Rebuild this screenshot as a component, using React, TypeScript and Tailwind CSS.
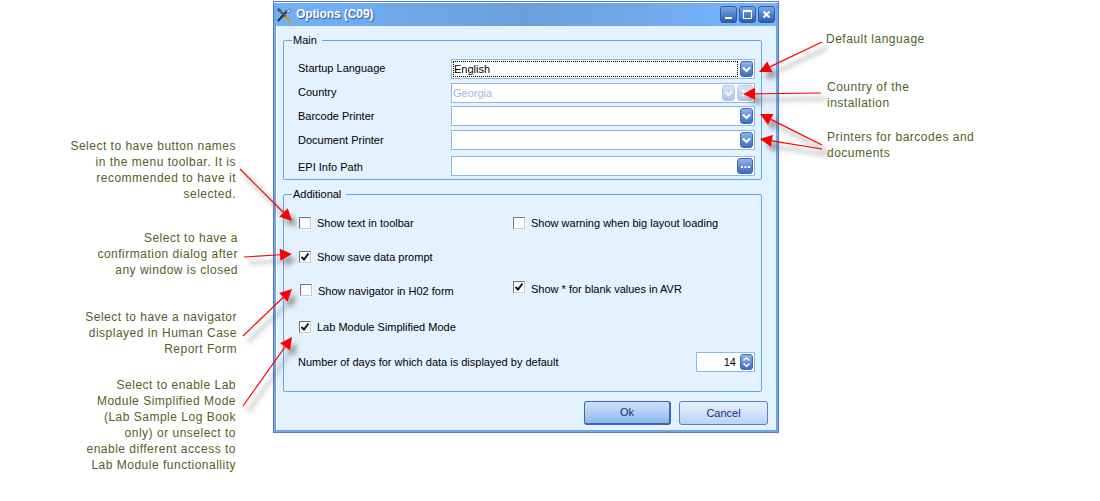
import React from 'react';

const arrows = [
  [822, 42, 759, 72],
  [821, 93, 743, 94],
  [822, 145, 760, 114],
  [822, 149, 760, 139],
  [240, 169, 292, 221],
  [244, 257, 292, 254],
  [243, 336, 292, 289],
  [243, 406, 292, 337],
];

const Arrows = () => (
  <svg width="1100" height="501" className="absolute inset-0 pointer-events-none">
    <defs>
      <filter id="soft" x="-30%" y="-30%" width="160%" height="160%">
        <feGaussianBlur stdDeviation="2.5" />
      </filter>
    </defs>
    {arrows.map(([x1, y1, x2, y2], i) => {
      const len = Math.hypot(x2 - x1, y2 - y1);
      const ux = (x2 - x1) / len;
      const uy = (y2 - y1) / len;
      const bx = x2 - ux * 12;
      const by = y2 - uy * 12;
      const head = `${x2},${y2} ${bx - uy * 6},${by + ux * 6} ${bx + uy * 6},${by - ux * 6}`;
      return (
        <g key={i}>
          <g transform="translate(5 6)" filter="url(#soft)" opacity="0.55">
            <line x1={x1} y1={y1} x2={bx} y2={by} stroke="#555" strokeWidth="2" />
            <polygon points={head} fill="#555" />
          </g>
          <line x1={x1} y1={y1} x2={bx} y2={by} stroke="#ff0000" strokeWidth="1.2" />
          <polygon points={head} fill="#ff0000" />
        </g>
      );
    })}
  </svg>
);

const Note = ({ className, children }: { className: string; children: React.ReactNode }) => (
  <div className={`absolute text-[12px] leading-[16px] tracking-[0.5px] text-[#4f6228] whitespace-nowrap ${className}`}>
    {children}
  </div>
);

const Chevron = ({ dim }: { dim?: boolean }) => (
  <svg width="9" height="7" viewBox="0 0 9 7">
    <path d="M1 1.5 L4.5 5 L8 1.5" fill="none" stroke="#fff" strokeWidth="2" opacity={dim ? 0.75 : 1} />
  </svg>
);

const DropButton = ({ children, dim, wide }: { children?: React.ReactNode; dim?: boolean; wide?: boolean }) => (
  <div
    className={`${wide ? 'w-[16px]' : 'w-[13px]'} h-[16px] rounded-[3px] flex items-center justify-center shrink-0 border ${
      dim
        ? 'border-[#b4c7e8] bg-gradient-to-b from-[#d6e2f6] to-[#b3c6e8]'
        : 'border-[#3f6bb5] bg-gradient-to-b from-[#8fb5ea] to-[#3d6cb8]'
    }`}
  >
    {children ?? <Chevron dim={dim} />}
  </div>
);

const Field = ({ children, className }: { children?: React.ReactNode; className: string }) => (
  <div className={`ml-[159px] w-[304px] bg-white border border-[#8fb6ee] flex items-center ${className}`}>{children}</div>
);

const Check = ({ checked, className = '' }: { checked?: boolean; className?: string }) => (
  <div
    className={`w-[12px] h-[12px] shrink-0 bg-white border border-t-[#707070] border-l-[#707070] border-r-[#c8c8c8] border-b-[#c8c8c8] shadow-[0_0_0_1px_#f4f8fd] flex items-center justify-center ${className}`}
  >
    {checked && (
      <svg width="10" height="10" viewBox="0 0 10 10">
        <path d="M1.5 5 L4 7.5 L8.5 1.5" fill="none" stroke="#111" strokeWidth="2" />
      </svg>
    )}
  </div>
);

const Tools = () => (
  <svg width="16" height="16" viewBox="0 0 16 16">
    <path d="M2 14 L11 4" stroke="#2b2b2b" strokeWidth="2" />
    <path d="M10 5 L13 2 L15 3 L13 6 Z" fill="#d8d8d8" stroke="#444" strokeWidth="0.6" />
    <path d="M3 1 L6 4 L5 6 L2 4 L1 2 Z" fill="#555" />
    <path d="M5 5 L10 10" stroke="#555" strokeWidth="2" />
    <path d="M9.5 9.5 L14 14" stroke="#d9962a" strokeWidth="3" />
  </svg>
);

const WinButton = ({ children }: { children: React.ReactNode }) => (
  <div className="w-[17px] h-[17px] rounded-[3px] border border-[#2f5aa6] bg-gradient-to-b from-[#7ba6e2] to-[#2e5ea8] flex items-center justify-center">
    {children}
  </div>
);

const Row = ({ label, className = '' }: { label: string; className?: string }) => (
  <div className={`absolute left-[14px] text-[#000] ${className}`}>{label}</div>
);

export default function App() {
  return (
    <div className="relative w-[1100px] h-[501px] overflow-hidden bg-white font-['Liberation_Sans',sans-serif]">
      <div className="ml-[273px] mt-px w-[506px] h-[432px] border border-[#5a78c0] pt-px">
        <div className="h-full border-2 border-t-0 border-[#6ea5ec] bg-[#e4f1fe] flex flex-col shadow-[inset_1px_0_0_#fff]">
          <div className="h-[23px] shrink-0 bg-gradient-to-r from-[#72b2f8] via-[#6a9fdc] to-[#76b6fc] flex items-center pr-px">
            <Tools />
            <span className="ml-[4px] -mt-[2px] text-[12px] font-bold tracking-[-0.1px] text-white [text-shadow:1px_1px_1px_#2f55a8]">Options (C09)</span>
            <div className="ml-auto flex gap-[2px]">
              <WinButton>
                <div className="w-[7px] h-[2px] mt-[7px] bg-white" />
              </WinButton>
              <WinButton>
                <div className="w-[9px] h-[9px] border border-white border-t-2" />
              </WinButton>
              <WinButton>
                <svg width="9" height="9" viewBox="0 0 9 9">
                  <path d="M1.5 1.5 L7.5 7.5 M7.5 1.5 L1.5 7.5" stroke="#fff" strokeWidth="2" />
                </svg>
              </WinButton>
            </div>
          </div>

          <div className="flex-1 flex flex-col pl-[7px] pr-[14px] text-[11px] text-black">
            <fieldset className="mt-[8px] h-[146px] border border-[#5aa8f2] rounded-[2px] pl-[8px] relative">
              <legend className="px-[1px] pr-[5px] leading-[13px]">Main</legend>
              <Row label="Startup Language" className="top-[13px]" />
              <Row label="Country" className="top-[37px]" />
              <Row label="Barcode Printer" className="top-[61px]" />
              <Row label="Document Printer" className="top-[85px]" />
              <Row label="EPI Info Path" className="top-[112px]" />
              <Field className="mt-[12px] h-[20px] pr-px">
                <div className="ml-px flex-1 h-[16px] border border-dotted border-black leading-[14px]">English</div>
                <div className="ml-[2px]"><DropButton /></div>
              </Field>
              <Field className="mt-[4px] h-[20px] pr-px">
                <div className="ml-px flex-1 text-[#9db8e6]">Georgia</div>
                <DropButton dim />
                <div className="ml-[2px]"><DropButton dim wide>
                  <svg width="8" height="8" viewBox="0 0 8 8"><path d="M1 1 L7 7 M7 1 L1 7" stroke="#fff" strokeWidth="2" /></svg>
                </DropButton></div>
              </Field>
              <Field className="mt-[3px] h-[20px] justify-end pr-px"><DropButton /></Field>
              <Field className="mt-[4px] h-[20px] justify-end pr-px"><DropButton /></Field>
              <Field className="mt-[6px] h-[20px] justify-end pr-px">
                <DropButton wide>
                  <svg width="9" height="3" viewBox="0 0 9 3"><path d="M0 1h2v2H0zM3.5 1h2v2h-2zM7 1h2v2H7z" fill="#fff" /></svg>
                </DropButton>
              </Field>
            </fieldset>

            <fieldset className="mt-[8px] h-[204px] border border-[#5aa8f2] rounded-[2px] pl-[8px] relative">
              <legend className="px-[1px] pr-[5px] leading-[13px]">Additional</legend>
              <div className="flex mt-[14px] items-center">
                <Check className="ml-[7px]" />
                <span className="ml-[6px] w-[196px]">Show text in toolbar</span>
                <Check />
                <span className="ml-[6px]">Show warning when big layout loading</span>
              </div>
              <div className="flex mt-[17px] items-center">
                <Check checked className="ml-[7px]" />
                <span className="ml-[6px]">Show save data prompt</span>
              </div>
              <div className="flex mt-[16px] items-start">
                <Check className="ml-[8px] mt-[3px]" />
                <span className="ml-[6px] w-[195px] mt-[2px]">Show navigator in H02 form</span>
                <Check checked />
                <span className="ml-[6px]">Show * for blank values in AVR</span>
              </div>
              <div className="flex mt-[19px] items-center">
                <Check checked className="ml-[7px]" />
                <span className="ml-[6px]">Lab Module Simplified Mode</span>
              </div>
              <div className="flex mt-[17px] items-center">
                <span className="ml-[6px] w-[398px]">Number of days for which data is displayed by default</span>
                <div className="w-[59px] h-[20px] bg-white border border-[#8fb6ee] flex items-center justify-end pr-px">
                  <span className="mr-[4px]">14</span>
                  <div className="flex flex-col w-[13px] h-[16px] rounded-[3px] border border-[#3f6bb5] bg-gradient-to-b from-[#8fb5ea] to-[#3d6cb8] items-center justify-center gap-[2px]">
                    <svg width="7" height="4" viewBox="0 0 7 4"><path d="M.5 3.5 L3.5 .7 L6.5 3.5" fill="none" stroke="#fff" strokeWidth="1.4" /></svg>
                    <svg width="7" height="4" viewBox="0 0 7 4"><path d="M.5 .5 L3.5 3.3 L6.5 .5" fill="none" stroke="#fff" strokeWidth="1.4" /></svg>
                  </div>
                </div>
              </div>
            </fieldset>

            <div className="mt-[9px] flex justify-end gap-[8px] -mr-[6px] text-[#0f2f78]">
              <button className="w-[87px] h-[24px] rounded-[3px] border border-[#3f64b4] border-b-2 border-r-2 bg-gradient-to-b from-[#cfe3fb] to-[#8db8ee]">Ok</button>
              <button className="w-[89px] h-[24px] rounded-[3px] border border-[#5c7fc0] bg-gradient-to-b from-[#e6f1fd] to-[#b9d4f6]">Cancel</button>
            </div>
          </div>
        </div>
      </div>

      <Arrows />

      <Note className="left-[826px] top-[31px]">Default language</Note>
      <Note className="left-[827px] top-[79px]">Country of the<br />installation</Note>
      <Note className="left-[827px] top-[129px]">Printers for barcodes and<br />documents</Note>
      <Note className="right-[864px] top-[138px] text-right">Select to have button names<br />in the menu toolbar. It is<br />recommended to have it<br />selected.</Note>
      <Note className="right-[862px] top-[230px] text-right">Select to have a<br />confirmation dialog after<br />any window is closed</Note>
      <Note className="right-[863px] top-[309px] text-right">Select to have a navigator<br />displayed in Human Case<br />Report Form</Note>
      <Note className="right-[864px] top-[377px] text-right">Select to enable Lab<br />Module Simplified Mode<br />(Lab Sample Log Book<br />only) or unselect to<br />enable different access to<br />Lab Module functionallity</Note>
    </div>
  );
}
